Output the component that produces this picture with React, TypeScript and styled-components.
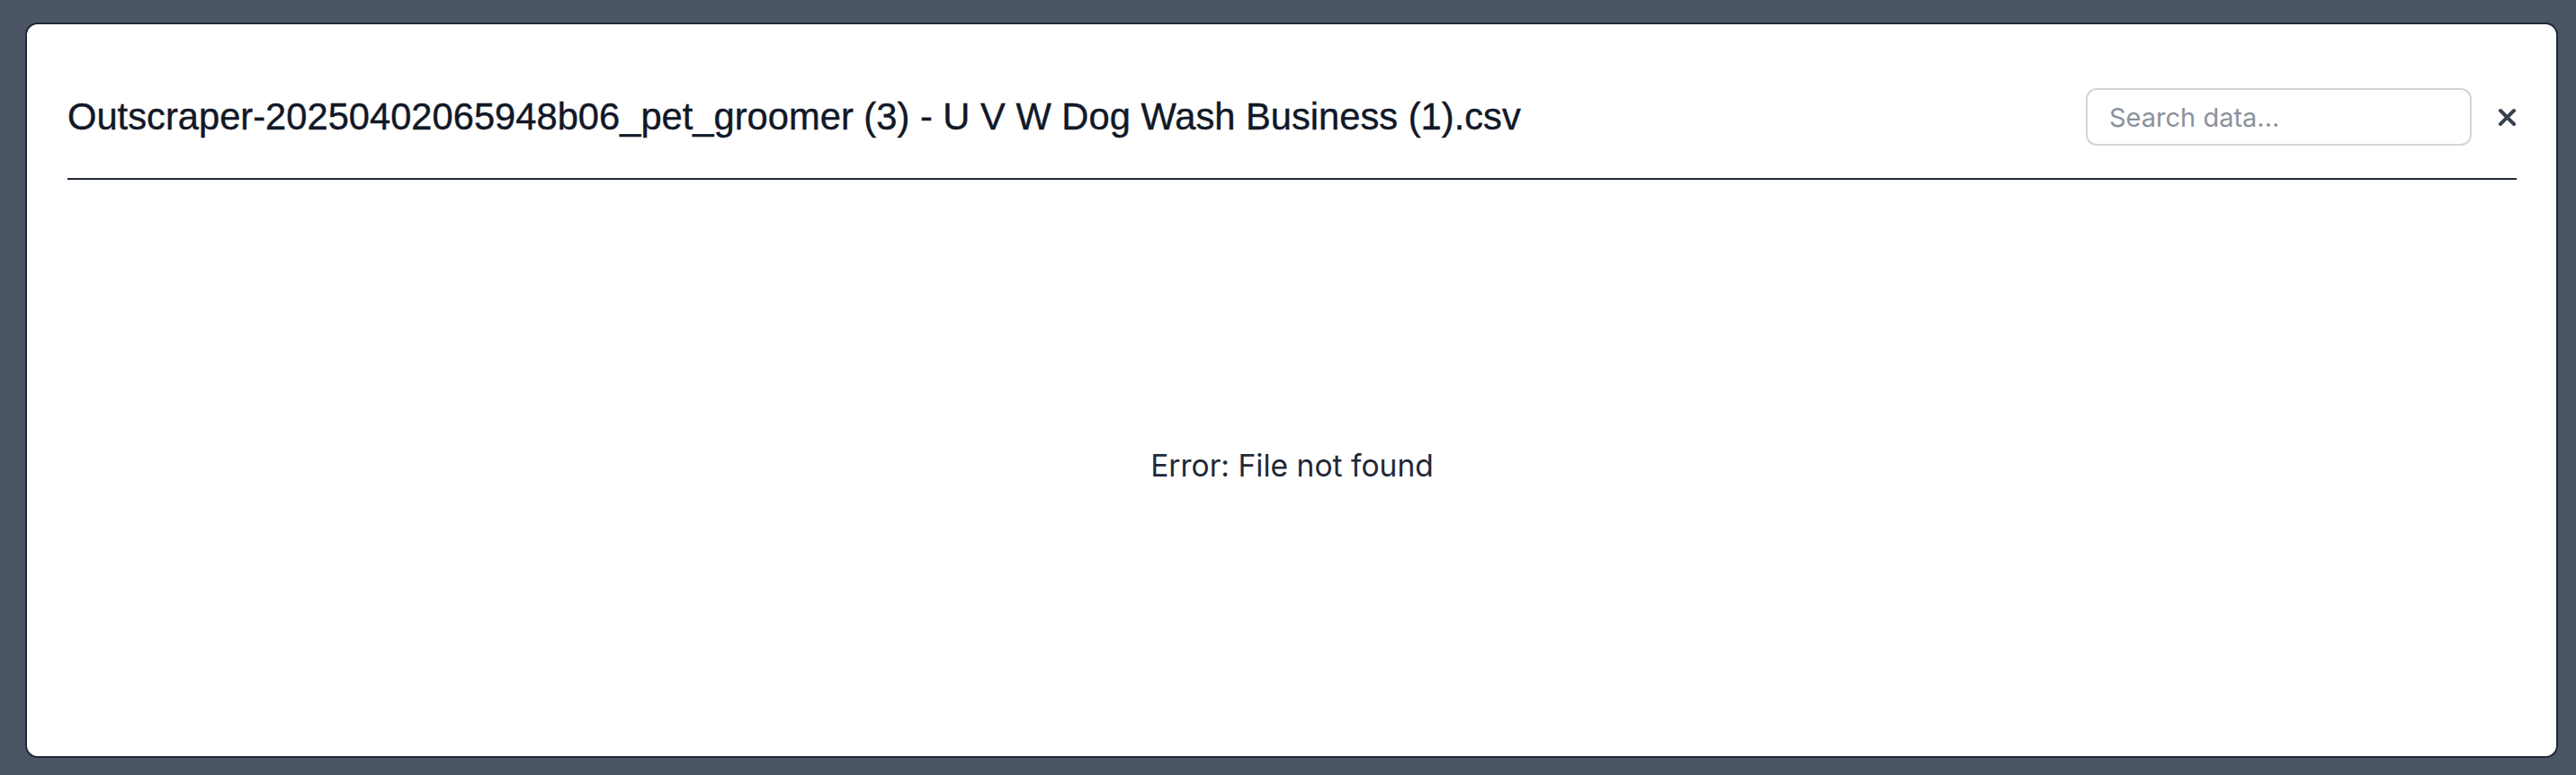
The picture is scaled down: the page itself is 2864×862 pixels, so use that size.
import React from "react";
import styled, { createGlobalStyle } from "styled-components";

const Global = createGlobalStyle`
  html, body { margin: 0; padding: 0; }
  body { background: #4b5563; font-family: Inter, "Noto Sans", sans-serif; }
`;

const Overlay = styled.div`
  box-sizing: border-box;
  width: 2864px;
  height: 862px;
  padding: 25px 20px 19px 28px;
  display: flex;
  background: #4b5563;
`;

const Modal = styled.div`
  box-sizing: border-box;
  flex: 1;
  display: flex;
  flex-direction: column;
  background: #ffffff;
  border: 2px solid #1f2937;
  border-radius: 14px;
  padding: 0 44px 0 45px;
`;

const Header = styled.div`
  display: flex;
  align-items: center;
  justify-content: space-between;
  padding: 71px 0 36px;
  border-bottom: 2px solid #1f2937;
`;

const Title = styled.h2`
  margin: 0;
  font-family: "Liberation Sans", Arial, sans-serif;
  font-weight: 400;
  font-size: 41.7px;
  line-height: 1;
  color: #111827;
  white-space: nowrap;
  -webkit-text-stroke: 0.4px #111827;
`;

const Controls = styled.div`
  display: flex;
  align-items: center;
  gap: 29px;
`;

const SearchInput = styled.input`
  box-sizing: border-box;
  width: 429px;
  height: 64px;
  border: 2px solid #d1d5db;
  border-radius: 12px;
  padding: 0 24px;
  font-family: Inter, sans-serif;
  font-size: 29px;
  color: #111827;
  outline: none;
  &::placeholder { color: #8b929c; }
`;

const CloseButton = styled.button`
  display: flex;
  align-items: center;
  justify-content: center;
  width: 21px;
  height: 21px;
  padding: 0;
  border: none;
  background: none;
  color: #374151;
  cursor: pointer;
`;

const Body = styled.div`
  flex: 1;
  display: flex;
  align-items: center;
  justify-content: center;
  padding-bottom: 6px;
`;

const ErrorText = styled.p`
  margin: 0;
  font-family: Inter, sans-serif;
  font-size: 33.6px;
  color: #1f2937;
`;

export default function App() {
  return (
    <>
      <Global />
      <Overlay>
        <Modal>
          <Header>
            <Title>Outscraper-20250402065948b06_pet_groomer (3) - U V W Dog Wash Business (1).csv</Title>
            <Controls>
              <SearchInput placeholder="Search data..." />
              <CloseButton aria-label="Close">
                <svg width="21" height="21" viewBox="0 0 21 21" fill="none">
                  <path d="M3 3L18 18M18 3L3 18" stroke="currentColor" strokeWidth="4" strokeLinecap="round" />
                </svg>
              </CloseButton>
            </Controls>
          </Header>
          <Body>
            <ErrorText>Error: File not found</ErrorText>
          </Body>
        </Modal>
      </Overlay>
    </>
  );
}
